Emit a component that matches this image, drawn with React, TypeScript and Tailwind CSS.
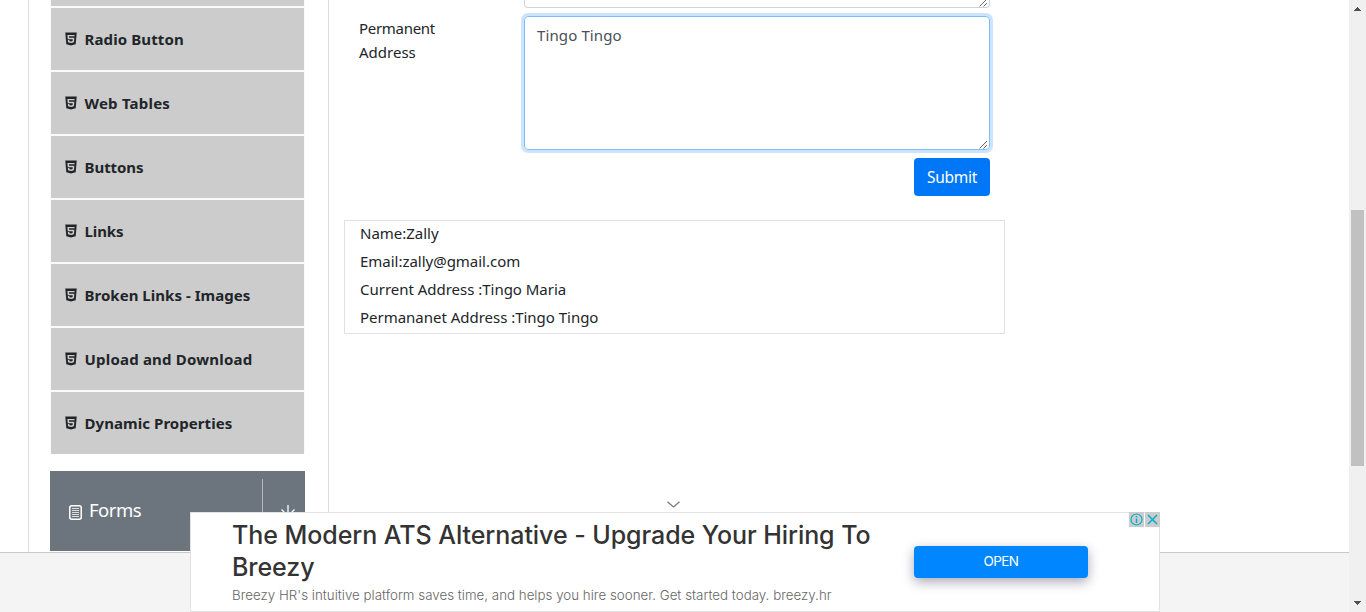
import React from "react";
import { AiFillHtml5 } from "react-icons/ai";

const menu: { label: string; tracking: string }[] = [
  { label: "Radio Button", tracking: "tracking-[0.11px]" },
  { label: "Web Tables", tracking: "tracking-[0.22px]" },
  { label: "Buttons", tracking: "tracking-[-0.05px]" },
  { label: "Links", tracking: "tracking-[-0.1px]" },
  { label: "Broken Links - Images", tracking: "tracking-[0.03px]" },
  { label: "Upload and Download", tracking: "tracking-[0.2px]" },
  { label: "Dynamic Properties", tracking: "tracking-[0.06px]" },
];

const output = [
  "Name:Zally",
  "Email:zally@gmail.com",
  "Current Address :Tingo Maria",
  "Permananet Address :Tingo Tingo",
];

function Grip() {
  return (
    <svg className="absolute right-0 bottom-0" width="10" height="9" viewBox="0 0 10 9" stroke="#555" strokeWidth="0.9">
      <path d="M0.5 8.5L8 1M4.5 8.5L8 5" fill="none" />
    </svg>
  );
}

function Sidebar() {
  return (
    <aside className="flex h-[552px] w-[301px] shrink-0 flex-col border-x border-[#dcdcdc] pl-[21px]">
      <ul className="flex w-[255px] flex-col gap-[2px] bg-[#fafafa] px-px">
        <li className="h-[6px] bg-[#ccc]" />
        {menu.map((m) => (
          <li key={m.label} className="flex h-[62px] items-center bg-[#ccc] pl-3 text-[#212529]">
            <AiFillHtml5 className="mb-px h-4 w-4" />
            <span className={"ml-[5.5px] text-[15px] font-bold whitespace-nowrap " + m.tracking}>{m.label}</span>
          </li>
        ))}
      </ul>
      <div className="mt-[17px] flex h-20 w-[255px] bg-[#6c757d] text-white">
        <div className="flex w-[212px] items-center pl-[19px]">
          <svg className="mt-[3px]" width="13" height="15" viewBox="0 0 13 15" fill="none" stroke="#fff">
            <rect x="0.75" y="0.75" width="11.5" height="13.5" rx="2" strokeWidth="1.5" />
            <path d="M3 3.5H10M3 5.5H10M3 7.5H10M3 9.5H10M3 11.5H10" strokeWidth="1" strokeOpacity="0.75" />
          </svg>
          <span className="mb-[3px] ml-[7px] text-[18.5px] tracking-[-0.5px]">Forms</span>
        </div>
        <div className="mt-2 mb-2 flex flex-1 justify-center border-l border-[#b5b8bb] pt-[26px] pl-[7px]">
          <svg width="16" height="16" viewBox="0 0 16 16" fill="none" stroke="#fff" strokeWidth="1.3">
            <path d="M8 0V14M1.5 4.5L8 11L14.5 4.5" />
          </svg>
        </div>
      </div>
    </aside>
  );
}

function Content() {
  return (
    <main className="flex w-[676px] flex-col pl-[15px]">
      <div className="flex pl-[15px]">
        <div className="w-[165px] pt-4 text-[15px] leading-6">
          <span className="tracking-[-0.3px]">Permanent</span>
          <br />
          Address
        </div>
        <div className="flex w-[466px] flex-col">
          <div className="relative h-2 rounded-b border border-t-0 border-[#ced4da]">
            <Grip />
          </div>
          <div className="relative mt-2 h-[134px] rounded border border-[#80bdff] px-3 py-[6px] text-[15px] leading-6 tracking-[0.12px] text-[#495057] shadow-[0_0_0_3px_#cce5ff]">
            Tingo Tingo
            <Grip />
          </div>
          <button className="mt-2 h-[38px] w-[76px] self-end rounded bg-[#0077f7] pt-px text-[15.5px] tracking-[-0.25px] text-white">
            Submit
          </button>
        </div>
      </div>
      <div className="mt-6 h-[114px] w-[661px] border border-[#dee2e6] pl-[15px] text-[15px]">
        {output.map((line) => (
          <p key={line} className="flex h-7 items-center pb-1 tracking-[-0.02px]">
            {line}
          </p>
        ))}
      </div>
    </main>
  );
}

function Ad() {
  return (
    <div className="absolute top-[512px] left-[190px] flex h-[100px] w-[970px] border border-[#e3e3e3] bg-white pl-[41px] font-['Inter',sans-serif]">
      <div className="w-[682px]">
        <div className="pt-[6px] text-[25px] leading-8 font-[450] tracking-[-0.06px] whitespace-nowrap text-[#333]">
          The Modern ATS Alternative - Upgrade Your Hiring To
          <br />
          Breezy
        </div>
        <div className="mt-[2px] text-[13.3px] leading-5 font-light tracking-[0.025px] whitespace-nowrap text-[#666]">
          Breezy HR&#39;s intuitive platform saves time, and helps you hire sooner. Get started today. breezy.hr
        </div>
      </div>
      <button className="mt-[33px] h-8 w-[174px] rounded-[4px] bg-[#0087ff] pb-px text-[13.5px] tracking-[-0.6px] text-white shadow-[0_4px_12px_rgba(40,40,80,0.4)]">
        OPEN
      </button>
      <div className="absolute -top-px -right-px flex gap-px">
        <svg width="15" height="15" viewBox="0 0 15 15" fill="none" stroke="#00aecd">
          <rect width="15" height="15" fill="#ccc" stroke="none" />
          <circle cx="7.5" cy="7.5" r="5.5" strokeWidth="1.2" />
          <path d="M7.5 4V5.3M7.5 6.4V11" strokeWidth="1.5" />
        </svg>
        <svg width="15" height="15" viewBox="0 0 15 15" fill="none" stroke="#00aecd" strokeWidth="1.5">
          <rect width="15" height="15" fill="#ccc" stroke="none" />
          <path d="M3 3L12 12M12 3L3 12" />
        </svg>
      </div>
      <svg className="absolute -top-3 left-[475px]" width="14" height="7" viewBox="0 0 14 7" fill="none" stroke="#777" strokeWidth="1.2">
        <path d="M1.5 0.7L7.5 6L13.5 0.7" />
      </svg>
    </div>
  );
}

function Scrollbar() {
  return (
    <div className="flex w-[17px] flex-col items-center bg-[#f0f0f0] text-[#505050]">
      <svg className="mt-[7px]" width="7" height="4" viewBox="0 0 7 4" fill="currentColor" shapeRendering="crispEdges">
        <path d="M3 0h1v1h1v1h1v1h1v1h-7v-1h1v-1h1v-1h1z" />
      </svg>
      <div className="mt-[199px] h-[256px] w-[13px] bg-[#c1c1c1]" />
      <svg className="mt-[135px]" width="7" height="4" viewBox="0 0 7 4" fill="currentColor" shapeRendering="crispEdges">
        <path d="M0 0h7v1h-1v1h-1v1h-1v1h-1v-1h-1v-1h-1v-1h-1z" />
      </svg>
    </div>
  );
}

export default function App() {
  return (
    <div className="relative flex h-[612px] w-[1366px] overflow-hidden bg-white font-['Noto_Sans',sans-serif] text-[#212529]">
      <div className="flex w-[1349px] flex-col">
        <div className="flex h-[552px] pl-7">
          <Sidebar />
          <Content />
        </div>
        <footer className="h-[60px] border-t border-[#c8c8c8] bg-[#f4f4f4]" />
      </div>
      <Scrollbar />
      <Ad />
    </div>
  );
}
